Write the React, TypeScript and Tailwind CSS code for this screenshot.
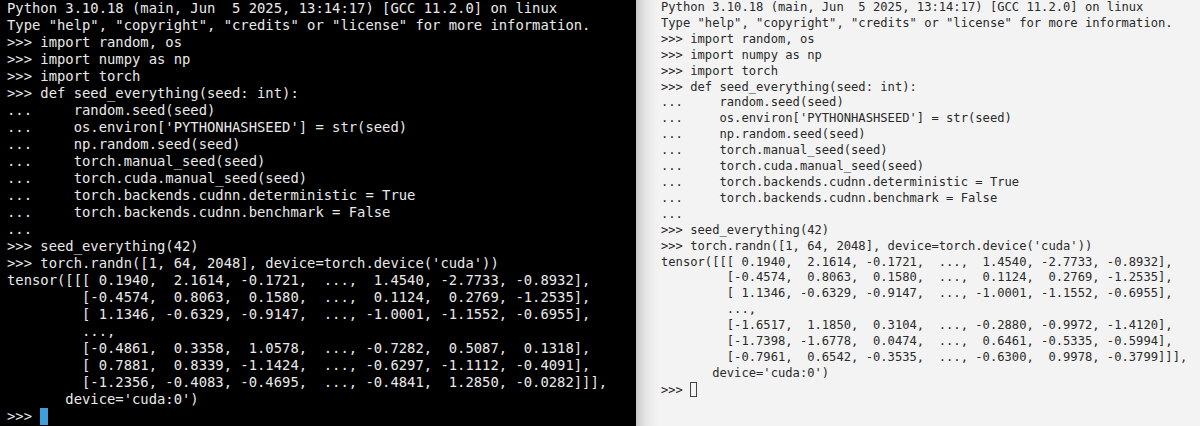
const header = [
  "Python 3.10.18 (main, Jun  5 2025, 13:14:17) [GCC 11.2.0] on linux",
  'Type "help", "copyright", "credits" or "license" for more information.',
  ">>> import random, os",
  ">>> import numpy as np",
  ">>> import torch",
  ">>> def seed_everything(seed: int):",
  "...     random.seed(seed)",
  "...     os.environ['PYTHONHASHSEED'] = str(seed)",
  "...     np.random.seed(seed)",
  "...     torch.manual_seed(seed)",
  "...     torch.cuda.manual_seed(seed)",
  "...     torch.backends.cudnn.deterministic = True",
  "...     torch.backends.cudnn.benchmark = False",
  "...",
  ">>> seed_everything(42)",
  ">>> torch.randn([1, 64, 2048], device=torch.device('cuda'))",
  "tensor([[[ 0.1940,  2.1614, -0.1721,  ...,  1.4540, -2.7733, -0.8932],",
  "         [-0.4574,  0.8063,  0.1580,  ...,  0.1124,  0.2769, -1.2535],",
  "         [ 1.1346, -0.6329, -0.9147,  ..., -1.0001, -1.1552, -0.6955],",
  "         ...,",
]

// the two machines print different last rows
const cudaRows = [
  "         [-0.4861,  0.3358,  1.0578,  ..., -0.7282,  0.5087,  0.1318],",
  "         [ 0.7881,  0.8339, -1.1424,  ..., -0.6297, -1.1112, -0.4091],",
  "         [-1.2356, -0.4083, -0.4695,  ..., -0.4841,  1.2850, -0.0282]]],",
]

const macRows = [
  "         [-1.6517,  1.1850,  0.3104,  ..., -0.2880, -0.9972, -1.4120],",
  "         [-1.7398, -1.6778,  0.0474,  ...,  0.6461, -0.5335, -0.5994],",
  "         [-0.7961,  0.6542, -0.3535,  ..., -0.6300,  0.9978, -0.3799]]],",
]

const footer = "       device='cuda:0')"

const App = () => {
  const left = [...header, ...cudaRows, footer].join("\n")
  const right = [...header, ...macRows, footer].join("\n")

  return (
    <div className="flex w-[1200px] h-[426px] overflow-hidden font-['DejaVu_Sans_Mono',monospace]">
      {/* dark terminal */}
      <div className="w-[636px] shrink-0 bg-black pl-[7px] overflow-hidden">
        <pre className="m-0 text-[13.85px] leading-[17px] text-[#e9e9e9] font-['DejaVu_Sans_Mono',monospace] whitespace-pre">
          {left}
          {"\n>>> "}
          <span className="inline-block w-[8px] h-[17px] align-top bg-[#3f9fdc]"></span>
        </pre>
      </div>

      {/* light terminal */}
      <div className="flex-1 pl-[25px] overflow-hidden bg-[linear-gradient(to_right,#c9c9c9,#e6e6e6_10px,#f3f3f3_22px)]">
        <pre className="m-0 text-[12.15px] leading-[15.9px] text-[#2a2a2a] font-['DejaVu_Sans_Mono',monospace] whitespace-pre">
          {right}
          {"\n>>> "}
          <span className="inline-block w-[7px] h-[15px] align-[-3px] border border-[#444]"></span>
        </pre>
      </div>
    </div>
  )
}

export default App
